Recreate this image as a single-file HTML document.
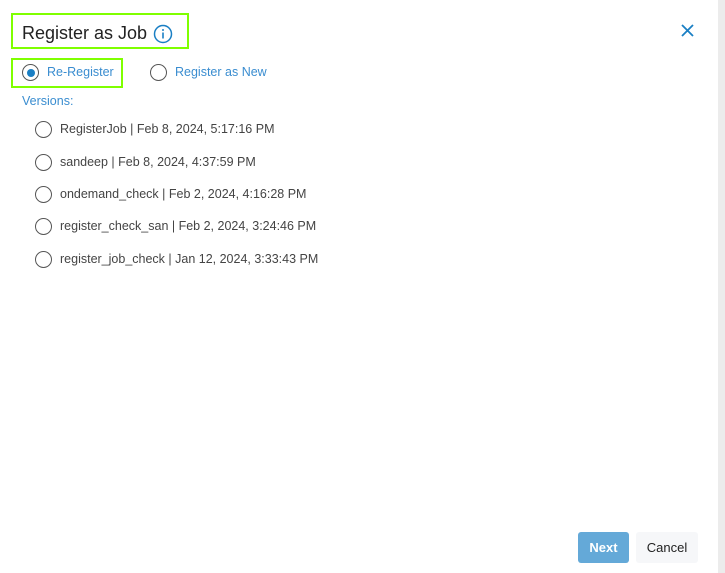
<!DOCTYPE html><html><head><style>
body{margin:0;width:725px;height:573px;background:#fff;font-family:"Liberation Sans",sans-serif;position:relative;overflow:hidden}
.a{position:absolute}
.rad{position:absolute;width:15px;height:15px;border:1.3px solid #555;border-radius:50%;box-sizing:border-box}
.row{position:absolute;left:35px;font-size:12.5px;color:#444}
.row .rad{left:0;top:0}
.row span{position:absolute;left:25px;top:0;white-space:nowrap;line-height:15px}
</style></head><body>
<div class="a" style="left:718px;top:0;width:7px;height:573px;background:#ececec"></div>
<div class="a" style="left:11px;top:13px;width:174px;height:32px;border:2.5px solid #7fff00"></div>
<div class="a" style="left:22px;top:23px;font-size:18px;color:#222">Register as Job</div>
<svg class="a" style="left:153px;top:24px" width="20" height="20" viewBox="0 0 20 20"><circle cx="10" cy="10" r="8.5" fill="none" stroke="#1a7fc4" stroke-width="1.5"/><rect x="9.2" y="8.5" width="1.6" height="6" fill="#1a7fc4"/><circle cx="10" cy="6" r="1" fill="#1a7fc4"/></svg>
<svg class="a" style="left:680px;top:23px" width="15" height="15" viewBox="0 0 15 15"><path d="M2 2L13 13M13 2L2 13" stroke="#1a7fc4" stroke-width="1.8"/></svg>
<div class="a" style="left:11px;top:58px;width:108px;height:26px;border:2.5px solid #7fff00"></div>
<div class="rad" style="left:22px;top:64px;width:17px;height:17px;border-color:#555"></div>
<div class="a" style="left:26.5px;top:68.5px;width:8px;height:8px;border-radius:50%;background:#1a7fc4"></div>
<div class="a" style="left:47px;top:65px;font-size:12.5px;color:#3a8dd0">Re-Register</div>
<div class="rad" style="left:150px;top:64px;width:17px;height:17px"></div>
<div class="a" style="left:175px;top:65px;font-size:12.5px;color:#3a8dd0">Register as New</div>
<div class="a" style="left:22px;top:94px;font-size:12.5px;color:#3a8dd0">Versions:</div>
<div class="row" style="top:121px"><div class="rad" style="width:17px;height:17px"></div><span style="top:1px">RegisterJob | Feb 8, 2024, 5:17:16 PM</span></div>
<div class="row" style="top:154px"><div class="rad" style="width:17px;height:17px"></div><span style="top:1px">sandeep | Feb 8, 2024, 4:37:59 PM</span></div>
<div class="row" style="top:186px"><div class="rad" style="width:17px;height:17px"></div><span style="top:1px">ondemand_check | Feb 2, 2024, 4:16:28 PM</span></div>
<div class="row" style="top:218px"><div class="rad" style="width:17px;height:17px"></div><span style="top:1px">register_check_san | Feb 2, 2024, 3:24:46 PM</span></div>
<div class="row" style="top:251px"><div class="rad" style="width:17px;height:17px"></div><span style="top:1px">register_job_check | Jan 12, 2024, 3:33:43 PM</span></div>
<div class="a" style="left:578px;top:532px;width:51px;height:31px;background:#64a9d8;border-radius:3px;color:#fff;font-size:13px;font-weight:bold;text-align:center;line-height:31px">Next</div>
<div class="a" style="left:636px;top:532px;width:62px;height:31px;background:#f6f7f9;border-radius:3px;color:#222;font-size:13px;text-align:center;line-height:31px">Cancel</div>
</body></html>
